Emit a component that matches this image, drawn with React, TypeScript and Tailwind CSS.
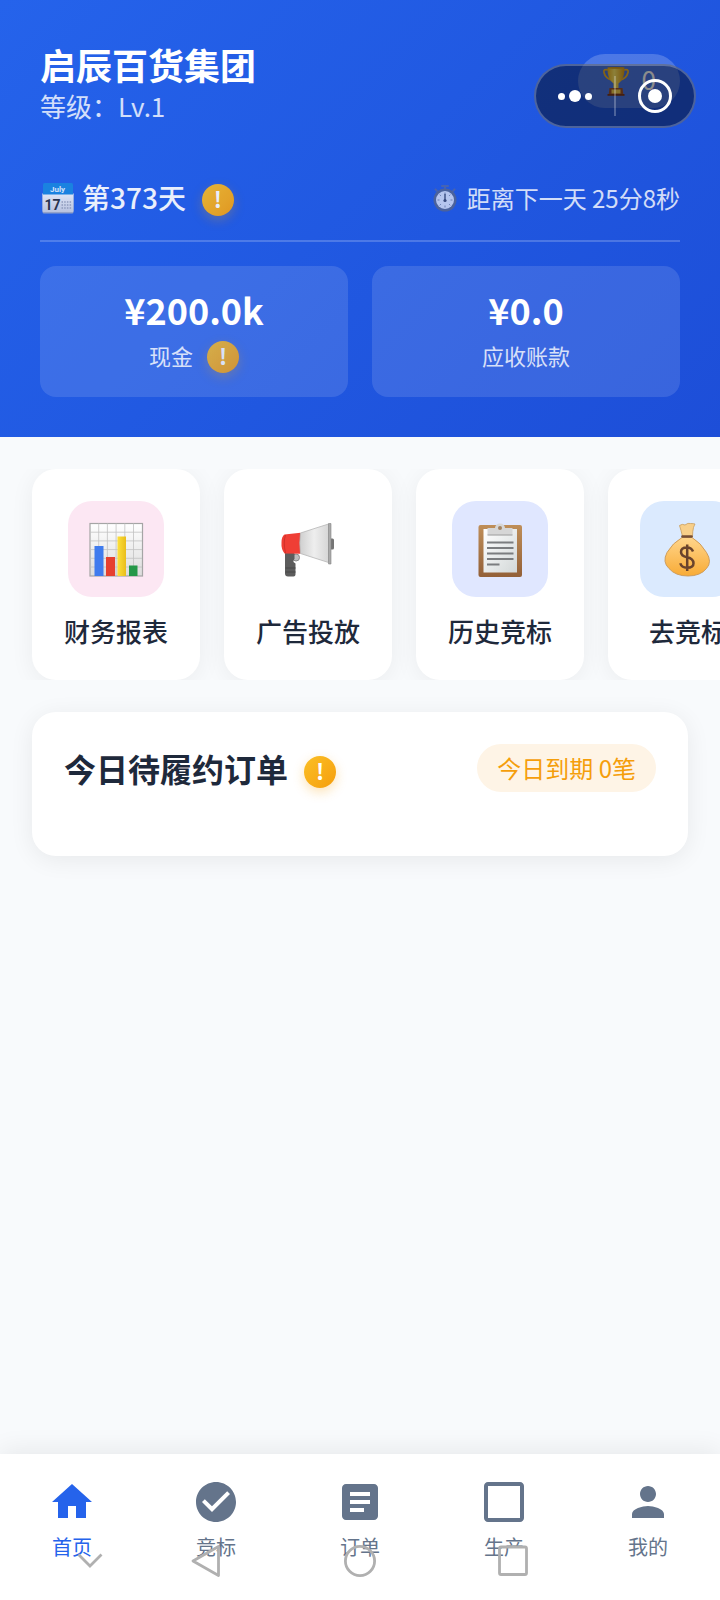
import type { ReactNode } from "react";

function CalendarIcon() {
  return (
    <svg viewBox="0 0 34 34" className="size-[34px] shrink-0" aria-hidden="true">
      <defs>
        <linearGradient id="calPaper" x1="0" y1="0" x2="0" y2="1">
          <stop offset="0" stopColor="#f4f5fa" />
          <stop offset="1" stopColor="#c9cede" />
        </linearGradient>
      </defs>
      <rect x="2.500" y="12" width="31" height="20.500" rx="1.500" fill="#9fa9c6" />
      <rect x="2.500" y="12" width="31" height="19" rx="1" fill="url(#calPaper)" />
      <path d="M3 3.500Q3 2 4.500 2h27Q33 2 33 3.500V13.500H3z" fill="#1a86e0" />
      <text x="17.500" y="10.500" textAnchor="middle" fontSize="8" fontWeight="700" fill="#e6f2ff" fontFamily="Roboto, sans-serif">
        July
      </text>
      <text x="12.500" y="29" textAnchor="middle" fontSize="14" fontWeight="700" fill="#2b3040" fontFamily="Roboto, sans-serif">
        17
      </text>
      <path d="M21.500 21h10M21.500 24h10M21.500 27h10" stroke="#9aa1b8" strokeWidth="1.500" strokeDasharray="1.500 1.200" />
    </svg>
  );
}

function StopwatchIcon() {
  return (
    <svg viewBox="0 0 28 30" className="h-[30px] w-7 shrink-0" aria-hidden="true">
      <path d="M11 3h6M14 3v4M4.500 6.500l2.500 2.500M23.500 6.500l-2.500 2.500" stroke="#4f66a8" strokeWidth="2.200" strokeLinecap="round" />
      <circle cx="14" cy="17" r="11.500" fill="#56658c" />
      <circle cx="14" cy="17" r="9" fill="#dbe1f3" />
      <path d="M14 9.500v2M14 22.500v2M6.500 17h2M19.500 17h2M8.700 11.700l1.200 1.200M19.300 11.700l-1.200 1.200M8.700 22.300l1.200-1.200M19.300 22.300l-1.200-1.200" stroke="#7c88ab" strokeWidth="1" />
      <path d="M14 11.500v6" stroke="#3d4868" strokeWidth="1.400" strokeLinecap="round" />
      <circle cx="14" cy="17.500" r="1.600" fill="#3d4868" />
    </svg>
  );
}

function TrophyIcon() {
  return (
    <svg viewBox="0 0 28 30" className="h-[30px] w-7" aria-hidden="true">
      <defs>
        <linearGradient id="cup" x1="0" y1="0" x2="1" y2="0">
          <stop offset="0" stopColor="#f0b41c" />
          <stop offset=".4" stopColor="#ffe96a" />
          <stop offset="1" stopColor="#e09c10" />
        </linearGradient>
      </defs>
      <path d="M6.500 4Q1 2.500 2 6.500q1.500 6 8 7.500M21.500 4Q27 2.500 26 6.500q-1.500 6-8 7.500" fill="none" stroke="#f0b429" strokeWidth="1.800" />
      <path d="M5.500 1.500h17q.5 11-6 16v5h-5v-5q-6.500-5-6-16z" fill="url(#cup)" />
      <ellipse cx="14" cy="1.800" rx="8.300" ry=".9" fill="#d49a1b" />
      <path d="M7.500 22h13l.8 6.500H6.700z" fill="#9c5430" />
      <path d="M5.500 28h17v1.800h-17z" fill="#7c3a1e" />
      <rect x="9.500" y="23.500" width="9" height="4" fill="#f5cf50" />
    </svg>
  );
}

function ChartIcon() {
  return (
    <svg viewBox="0 0 56 56" className="size-14" aria-hidden="true">
      <defs>
        <linearGradient id="grid" x1="0" y1="0" x2="0" y2="1">
          <stop offset="0" stopColor="#ffffff" />
          <stop offset="1" stopColor="#dcdcdc" />
        </linearGradient>
        <linearGradient id="yellowBar" x1="0" y1="0" x2="1" y2="0">
          <stop offset="0" stopColor="#fde03b" />
          <stop offset="1" stopColor="#e9bd1b" />
        </linearGradient>
      </defs>
      <rect x="2" y="2.500" width="52.500" height="52.500" fill="url(#grid)" stroke="#a5a5a5" strokeWidth="1.200" />
      <path d="M10.700 2.500v52M19.400 2.500v52M28.100 2.500v52M36.800 2.500v52M45.500 2.500v52M2 11.200h52M2 19.900h52M2 28.600h52M2 37.300h52M2 46h52" stroke="#c2c2c2" strokeWidth=".8" />
      <rect x="6.500" y="25" width="9" height="30" fill="#3f7bee" />
      <rect x="18" y="36" width="9" height="19" fill="#e6402f" />
      <rect x="29.500" y="15.500" width="8.500" height="39.500" fill="url(#yellowBar)" />
      <rect x="41" y="44.500" width="8.500" height="10.500" fill="#249848" />
    </svg>
  );
}

function MegaphoneIcon() {
  return (
    <svg viewBox="0 0 56 56" className="size-14" aria-hidden="true">
      <defs>
        <linearGradient id="cone" x1="0" y1="0" x2="1" y2="0">
          <stop offset="0" stopColor="#cfcfcf" />
          <stop offset=".5" stopColor="#eeeeee" />
          <stop offset="1" stopColor="#d6d6d6" />
        </linearGradient>
      </defs>
      <g transform="translate(-.5 1)">
        <rect x="50" y="16.500" width="4.500" height="11" rx="1.500" fill="#757575" />
        <circle cx="16.500" cy="35.500" r="3.500" fill="#bdbdbd" stroke="#8b8b8b" />
        <path d="M5.500 31h9.500v6q-1.500 1-1 3l2 1.500v11q0 2-2 2H8.500q-3 0-3-3z" fill="#5c5c5c" />
        <path d="M6 50h10M6 46h10" stroke="#464646" strokeWidth="1" />
        <path d="M5 12.500l16-1.700v21L5 31.500Q1.500 27 2 20.500 2 14.500 5 12.500z" fill="#ef3e35" />
        <path d="M6 13q-2.500 7 0 18" fill="none" stroke="#c92c27" strokeWidth=".8" />
        <path d="M21 11l28-9v38.500L21 31.500q-1.500-10 0-20.500z" fill="url(#cone)" stroke="#b5b5b5" strokeWidth=".8" />
        <path d="M49 1.500h2.500V42H49z" fill="#aaa" stroke="#858585" strokeWidth=".6" />
      </g>
    </svg>
  );
}

function ClipboardIcon() {
  return (
    <svg viewBox="0 0 56 56" className="size-14" aria-hidden="true">
      <defs>
        <linearGradient id="board" x1="0" y1="0" x2="0" y2="1">
          <stop offset="0" stopColor="#bf8e58" />
          <stop offset="1" stopColor="#936038" />
        </linearGradient>
        <linearGradient id="sheet" x1="0" y1="0" x2="1" y2="1">
          <stop offset="0" stopColor="#ffffff" />
          <stop offset="1" stopColor="#d3d8d8" />
        </linearGradient>
      </defs>
      <rect x="6.500" y="4" width="43.500" height="52" rx="2" fill="url(#board)" />
      <rect x="11.500" y="8" width="33.500" height="43.500" fill="url(#sheet)" />
      <path d="M15.500 7h7.500Q23.500 2.500 28 2.500t5 4.500h7.500v7h-25z" fill="#d6d6d6" />
      <path d="M15.500 14h25" stroke="#a7a7a7" strokeWidth="1.200" />
      <circle cx="28" cy="7" r="2" fill="#a38363" />
      <path d="M15 21.500h26.500M15 27h26.500M15 32.500h26.500M15 38h26.500M15 43.500h12.500" stroke="#7b7d7f" strokeWidth="2" />
    </svg>
  );
}

function MoneyBagIcon() {
  return (
    <svg viewBox="0 0 56 56" className="size-14" aria-hidden="true">
      <defs>
        <linearGradient id="bag" x1="0" y1="0" x2="0" y2="1">
          <stop offset="0" stopColor="#ffd58b" />
          <stop offset="1" stopColor="#f8ab36" />
        </linearGradient>
      </defs>
      <path d="M22.500 15.500Q21 9 19.500 4.500q3-2 5.500-.5 3-2.500 5.500-1.500 3 0 4.500.5-1 2-1.500 3.500-1 4-1 9z" fill="#f8cf89" stroke="#c99d5c" strokeWidth=".8" />
      <path d="M22 16.500h10q9 5.500 14.500 15 6 9.500 0 16-6 7.500-18.500 7.500T9 47.500Q2 41 7 31.500q5.500-9.500 15-15z" fill="url(#bag)" stroke="#c99757" strokeWidth=".9" />
      <path d="M22.500 15.500h9" stroke="#754d34" strokeWidth="2.600" strokeLinecap="round" />
      <path d="M33 30.500q-1.500-4-6-4-6 0-6 4.500 0 4 6.200 5.300 6.300 1.500 6.300 6 0 4.500-6.500 4.500-5.500 0-6.700-4.500M27.200 23.500v26.500" fill="none" stroke="#6a432c" strokeWidth="2.500" />
    </svg>
  );
}

function Alert({ label }: { label: string }) {
  return (
    <button
      type="button"
      aria-label={label}
      className="flex size-8 shrink-0 items-center justify-center rounded-full bg-linear-to-br from-[#fbbf24] to-[#f59e0b] pb-1 text-[22px] leading-7 font-bold text-white shadow-[0_4px_12px_rgba(245,158,11,0.3)]"
    >
      !
    </button>
  );
}

function Stat({ value, label, alert }: { value: string; label: string; alert?: boolean }) {
  return (
    <div className="flex flex-1 flex-col items-center rounded-2xl bg-white/12 py-6">
      <div className="text-[36px] leading-[39px] font-bold">{value}</div>
      <div className="mt-3 flex h-8 items-center gap-3.5 text-[22px] opacity-80">
        <span className="pb-1 leading-7">{label}</span>
        {alert && <Alert label="现金说明" />}
      </div>
    </div>
  );
}

const actions: { label: string; tint: string; icon: ReactNode }[] = [
  { label: "财务报表", tint: "bg-[#fce7f3]", icon: <ChartIcon /> },
  { label: "广告投放", tint: "bg-transparent", icon: <MegaphoneIcon /> },
  { label: "历史竞标", tint: "bg-[#e0e7ff]", icon: <ClipboardIcon /> },
  { label: "去竞标", tint: "bg-[#dbeafe]", icon: <MoneyBagIcon /> },
];

const tabs = [
  { label: "首页", path: "M10 20v-6h4v6h5v-8h3L12 3 2 12h3v8z" },
  {
    label: "竞标",
    path: "M12 2C6.480 2 2 6.480 2 12s4.480 10 10 10 10-4.480 10-10S17.520 2 12 2zm-2 15l-5-5 1.410-1.410L10 14.170l7.590-7.590L19 8l-9 9z",
  },
  {
    label: "订单",
    path: "M19 3H5c-1.100 0-2 .9-2 2v14c0 1.100.9 2 2 2h14c1.100 0 2-.9 2-2V5c0-1.100-.9-2-2-2zm-5 14H7v-2h7v2zm3-4H7v-2h10v2zm0-4H7V7h10v2z",
  },
  {
    label: "生产",
    path: "M20 2H4c-1.100 0-2 .9-2 2v16c0 1.100.9 2 2 2h16c1.100 0 2-.9 2-2V4c0-1.100-.9-2-2-2zm0 18H4V4h16v16z",
  },
  {
    label: "我的",
    path: "M12 12c2.210 0 4-1.790 4-4s-1.790-4-4-4-4 1.790-4 4 1.790 4 4 4zm0 2c-2.670 0-8 1.340-8 4v2h16v-2c0-2.660-5.330-4-8-4z",
  },
];

function SystemKeys() {
  return (
    <div className="pointer-events-none absolute inset-x-0 bottom-[23px] grid grid-cols-[129fr_154fr_154fr_154fr_129fr] justify-items-center">
      <svg viewBox="0 0 32 32" className="mr-6 size-8 justify-self-end" fill="none" stroke="#b0b0b0" strokeWidth="2.800" aria-hidden="true">
        <path d="M5.500 9.500L17 21 28.500 9.500" />
      </svg>
      <svg viewBox="0 0 32 32" className="size-8" fill="none" stroke="#b0b0b0" strokeWidth="2.800" strokeLinejoin="round" aria-hidden="true">
        <path d="M28.500 1.500v29L3 16z" />
      </svg>
      <svg viewBox="0 0 32 32" className="size-8" fill="none" stroke="#b0b0b0" strokeWidth="2.800" aria-hidden="true">
        <circle cx="16" cy="16" r="14.600" />
      </svg>
      <svg viewBox="0 0 32 32" className="size-8" fill="none" stroke="#b0b0b0" strokeWidth="2.800" aria-hidden="true">
        <rect x="1.500" y="2" width="27" height="27.500" rx="1.500" />
      </svg>
    </div>
  );
}

export default function App() {
  return (
    <div className="relative flex min-h-screen flex-col bg-[#f8fafc] font-['Noto_Sans_CJK_SC',sans-serif] text-[#1e293b]">
      <header className="bg-linear-135 from-[#2563eb] to-[#1d4ed8] px-10 pt-10 pb-10 text-white">
        <div className="flex items-start justify-between">
          <div>
            <h1 className="text-[36px] leading-[48px] font-bold">启辰百货集团</h1>
            <p className="text-[26px] leading-9 opacity-80">等级：Lv.1</p>
          </div>
          <div className="mt-3.5 flex h-[54px] items-center gap-3 rounded-full bg-white/20 px-6 text-[26px]">
            <TrophyIcon />
            <span className="pb-1 leading-8">0</span>
          </div>
        </div>

        <div className="mt-[54px] flex items-center justify-between border-b-2 border-white/20 pb-[22px]">
          <div className="flex h-10 items-center opacity-90">
            <CalendarIcon />
            <span className="mr-4 ml-2 pb-0.5 text-[28px] leading-[38px] font-medium">第373天</span>
            <div className="pt-1">
              <Alert label="天数说明" />
            </div>
          </div>
          <div className="flex items-center gap-2 text-[24px] leading-10 opacity-80">
            <StopwatchIcon />
            <span>距离下一天 25分8秒</span>
          </div>
        </div>

        <div className="mt-6 flex gap-6">
          <Stat value="¥200.0k" label="现金" alert />
          <Stat value="¥0.0" label="应收账款" />
        </div>
      </header>

      <div className="absolute top-16 right-6 flex h-16 w-[162px] items-center rounded-full border-2 border-white/25 bg-black/45">
        <button type="button" aria-label="更多" className="flex h-full flex-1 items-center justify-center gap-1">
          <span className="size-[7px] rounded-full bg-white" />
          <span className="size-3 rounded-full bg-white" />
          <span className="size-[7px] rounded-full bg-white" />
        </button>
        <span className="h-10 w-[2px] bg-white/25" />
        <button type="button" aria-label="关闭" className="flex h-full flex-1 items-center justify-center">
          <span className="flex size-[34px] items-center justify-center rounded-full border-[3px] border-white">
            <span className="size-3.5 rounded-full bg-white" />
          </span>
        </button>
      </div>

      <main className="flex-1">
        <div className="mt-8 flex gap-6 overflow-x-auto px-8 [scrollbar-width:none]">
          {actions.map((a) => (
            <button
              key={a.label}
              type="button"
              className="flex shrink-0 flex-col items-center rounded-3xl bg-white p-8 shadow-[0_4px_24px_rgba(0,0,0,0.06)]"
            >
              <span className={`flex size-24 items-center justify-center rounded-3xl ${a.tint}`}>{a.icon}</span>
              <span className="mt-4 text-[26px] leading-[35px] font-medium">{a.label}</span>
            </button>
          ))}
        </div>

        <section className="mx-8 mt-8 flex min-h-36 items-start justify-between rounded-3xl bg-white p-8 shadow-[0_4px_24px_rgba(0,0,0,0.07)]">
          <div className="flex items-center gap-4">
            <h2 className="text-[32px] leading-[48px] font-bold">今日待履约订单</h2>
            <div className="pt-2">
              <Alert label="订单说明" />
            </div>
          </div>
          <span className="rounded-3xl bg-[#fef4e6] px-5 text-[24px] leading-[48px] text-[#f59e0b]">今日到期 0笔</span>
        </section>
      </main>

      <nav className="sticky bottom-0 grid grid-cols-5 bg-white pt-6 pb-[38px] shadow-[0_-4px_24px_rgba(0,0,0,0.07)]">
        {tabs.map((t, i) => (
          <a
            key={t.label}
            href="#"
            className={`flex flex-col items-center gap-1.5 ${i === 0 ? "text-[#2563eb]" : "text-[#64748b]"}`}
          >
            <svg viewBox="0 0 24 24" className="size-12" fill="currentColor" aria-hidden="true">
              <path d={t.path} />
            </svg>
            <span className="text-[20px] leading-[30px]">{t.label}</span>
          </a>
        ))}
        <SystemKeys />
      </nav>
    </div>
  );
}
